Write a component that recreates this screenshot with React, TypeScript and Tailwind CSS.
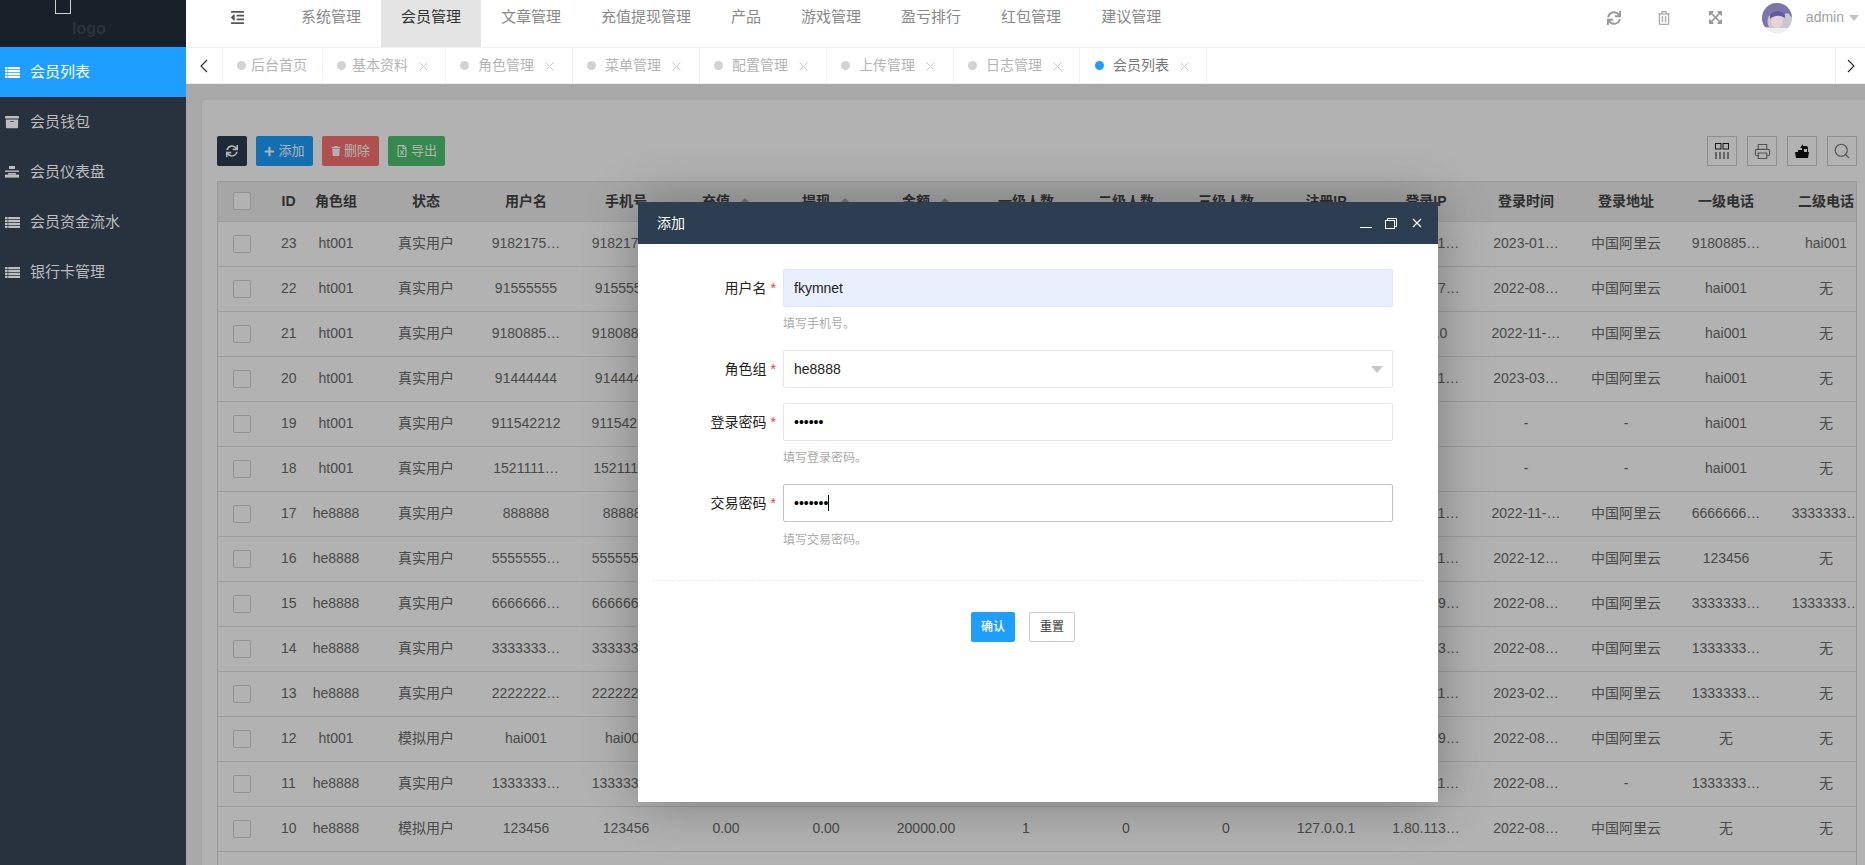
import React from 'react';
import { FaArchive, FaOutdent, FaSync, FaRegTrashAlt, FaExpandArrowsAlt, FaPlus, FaTrash, FaRegFileExcel } from 'react-icons/fa';
import { FiPrinter, FiSearch } from 'react-icons/fi';

function DashIcon() {
  return (
    <svg viewBox="0 0 14 12" className="h-[12px] w-[14px] fill-current">
      <rect x="4" y="0" width="6" height="3" />
      <rect x="0" y="4.5" width="14" height="1.4" />
      <rect x="3" y="7" width="8" height="1.6" />
      <rect x="0" y="8.6" width="14" height="3" />
    </svg>
  );
}

function ListIcon() {
  return (
    <svg viewBox="0 0 15 11" className="h-[11px] w-[15px] fill-current">
      <path d="M0 0h2.6v2.2H0zM3.2 0H15v2.2H3.2zM0 2.9h2.6v2.2H0zM3.2 2.9H15v2.2H3.2zM0 5.8h2.6V8H0zM3.2 5.8H15V8H3.2zM0 8.7h2.6V11H0zM3.2 8.7H15V11H3.2z" />
    </svg>
  );
}

const side = [
  { t: '会员列表', i: <ListIcon />, a: true },
  { t: '会员钱包', i: <FaArchive size={14} /> },
  { t: '会员仪表盘', i: <DashIcon /> },
  { t: '会员资金流水', i: <ListIcon /> },
  { t: '银行卡管理', i: <ListIcon /> },
];

const nav = ['系统管理', '会员管理', '文章管理', '充值提现管理', '产品', '游戏管理', '盈亏排行', '红包管理', '建议管理'];

const tabs = [
  { t: '后台首页', cls: 'w-[100px] pl-[14px]', gap: 'ml-[5px]', x: false },
  { t: '基本资料', cls: 'w-[123px] pl-[14px]', gap: 'ml-[6px]', x: true },
  { t: '角色管理', cls: 'w-[127px] pl-[14px]', gap: 'ml-[9px]', x: true },
  { t: '菜单管理', cls: 'w-[127px] pl-[14px]', gap: 'ml-[9px]', x: true },
  { t: '配置管理', cls: 'w-[127px] pl-[14px]', gap: 'ml-[9px]', x: true },
  { t: '上传管理', cls: 'w-[127px] pl-[14px]', gap: 'ml-[9px]', x: true },
  { t: '日志管理', cls: 'w-[126px] pl-[14px]', gap: 'ml-[9px]', x: true },
  { t: '会员列表', cls: 'w-[127px] pl-[15px]', gap: 'ml-[9px]', x: true, a: true },
];

const heads = ['状态', '用户名', '手机号', '充值', '提现', '金额', '一级人数', '二级人数', '三级人数', '注册IP', '登录IP', '登录时间', '登录地址', '一级电话', '二级电话'];

const A = '中国阿里云';
type R = [number, string, string, string, string, string, string, string, string, string, string];
const rows: R[] = [
  [23, 'ht001', '真实用户', '9182175…', '127.0.0.1', '1.80.111…', '2023-01…', A, '9180885…', 'hai001', '0'],
  [22, 'ht001', '真实用户', '91555555', '127.0.0.1', '1.80.117…', '2022-08…', A, 'hai001', '无', '0'],
  [21, 'ht001', '真实用户', '9180885…', '127.0.0.1', '1.0.0.0', '2022-11-…', A, 'hai001', '无', '0'],
  [20, 'ht001', '真实用户', '91444444', '127.0.0.1', '1.80.111…', '2023-03…', A, 'hai001', '无', '0'],
  [19, 'ht001', '真实用户', '911542212', '127.0.0.1', '', '-', '-', 'hai001', '无', '0'],
  [18, 'ht001', '真实用户', '1521111…', '127.0.0.1', '', '-', '-', 'hai001', '无', '0'],
  [17, 'he8888', '真实用户', '888888', '127.0.0.1', '1.80.111…', '2022-11-…', A, '6666666…', '3333333…', '0'],
  [16, 'he8888', '真实用户', '5555555…', '127.0.0.1', '1.80.111…', '2022-12…', A, '123456', '无', '0'],
  [15, 'he8888', '真实用户', '6666666…', '127.0.0.1', '1.80.119…', '2022-08…', A, '3333333…', '1333333…', '0'],
  [14, 'he8888', '真实用户', '3333333…', '127.0.0.1', '1.80.113…', '2022-08…', A, '1333333…', '无', '0'],
  [13, 'he8888', '真实用户', '2222222…', '127.0.0.1', '1.80.111…', '2023-02…', A, '1333333…', '无', '0'],
  [12, 'ht001', '模拟用户', 'hai001', '127.0.0.1', '1.80.119…', '2022-08…', A, '无', '无', '0'],
  [11, 'he8888', '真实用户', '1333333…', '127.0.0.1', '1.80.111…', '2022-08…', '-', '1333333…', '无', '0'],
  [10, 'he8888', '模拟用户', '123456', '127.0.0.1', '1.80.113…', '2022-08…', A, '无', '无', '1'],
];

function Check() {
  return <div className="ml-[15px] h-[18px] w-[18px] rounded-[2px] border border-[#d2d2d2] bg-white" />;
}

function Tri({ cls }: { cls: string }) {
  return <span className={'inline-block h-0 w-0 border-x-[5px] border-x-transparent ' + cls} />;
}

function ToolBtn({ cls, icon, text }: { cls: string; icon: React.ReactNode; text: string }) {
  return (
    <button className={'flex h-[30px] w-[57px] items-center justify-center gap-[3px] rounded-[2px] text-[13px] text-white ' + cls}>
      {icon}
      <span>{text}</span>
    </button>
  );
}

function Square({ children }: { children: React.ReactNode }) {
  return <div className="flex h-[30px] w-[30px] items-center justify-center border border-[#ccc] text-[#555]">{children}</div>;
}

function Field({ label, children, help, helpGap }: { label: string; children: React.ReactNode; help?: string; helpGap?: string }) {
  return (
    <div className="flex">
      <div className="flex h-[38px] w-[134px] items-center justify-end text-[14px] text-[#222]">
        <span>{label}</span>
        <span className="ml-[4px] mr-[6px] text-[#ff3333]">*</span>
      </div>
      <div className="ml-[1px] w-[610px]">
        {children}
        {help ? <div className={'h-[16px] text-[12px] leading-[16px] text-[#aaa] ' + (helpGap ?? 'mt-[9px]')}>{help}</div> : null}
      </div>
    </div>
  );
}

export default function App() {
  return (
    <div className="flex h-screen w-full overflow-hidden bg-white [font-family:'Liberation_Sans','Noto_Sans_CJK_SC',sans-serif]">
      <aside className="w-[186px] shrink-0 bg-[#28323e]">
        <div className="h-[47px] overflow-hidden bg-[#18202a]">
          <div className="ml-[55px] h-[14px] w-[16px] border border-t-0 border-[#cfcfcf]" />
          <div className="ml-[72px] mt-[6px] text-[16px] font-bold leading-[18px] text-[#2e333a]">logo</div>
        </div>
        {side.map((s) => (
          <div key={s.t} className={'flex h-[50px] items-center text-[15px] ' + (s.a ? 'bg-[#1e9fff] text-white' : 'text-[#bdbdbd]')}>
            <span className="ml-[5px] flex w-[25px] items-center">{s.i}</span>
            <span>{s.t}</span>
          </div>
        ))}
      </aside>

      <main className="flex min-w-0 flex-1 flex-col">
        <header className="flex h-[47px] shrink-0 bg-white">
          <div className="flex h-[34px] w-[95px] items-center justify-center pl-[8px] text-[#555]">
            <FaOutdent size={15} />
          </div>
          {nav.map((n) => (
            <div
              key={n}
              className={'h-[47px] px-[20px] text-[15px] leading-[34px] ' + (n === '会员管理' ? 'bg-[#e4e4e4] text-[#333]' : 'text-[#888]')}
            >
              {n}
            </div>
          ))}
          <div className="ml-auto flex h-[35px] items-center pr-[6px]">
            <FaSync size={14} className="text-[#999]" />
            <FaRegTrashAlt size={14} className="ml-[36px] text-[#aaa]" />
            <FaExpandArrowsAlt size={15} className="ml-[37px] text-[#999]" />
            <svg viewBox="0 0 30 30" className="ml-[39px] h-[30px] w-[30px] rounded-full">
              <rect width="30" height="30" fill="#c9c7cf" />
              <path d="M0 0H30V15C27 10 25 9 22 12 17 10 12 10 7 13 5 16 5 20 7 24L0 24Z" fill="#7b74ad" />
              <ellipse cx="15" cy="18" rx="6" ry="7" fill="#e4d5d3" />
              <path d="M8 12C12 7 20 7 23 12L23 15C18 12 13 12 8 16Z" fill="#625a9c" />
              <rect y="25" width="30" height="5" fill="#eef0ee" />
            </svg>
            <span className="ml-[14px] text-[14px] text-[#a0a0a0]">admin</span>
            <Tri cls="ml-[5px] border-t-[6px] border-t-[#c4c4c4]" />
          </div>
        </header>

        <nav className="flex h-[37px] shrink-0 border-y border-[#f0f0f0] bg-white">
          <div className="flex w-[37px] shrink-0 items-center justify-center border-r border-[#f0f0f0]">
            <svg viewBox="0 0 8 14" className="h-[14px] w-[8px] fill-none stroke-[#223] stroke-[1.1]"><path d="M7 1 1 7l6 6" /></svg>
          </div>
          {tabs.map((t) => (
            <div key={t.t} className={'flex shrink-0 items-center border-r border-[#f0f0f0] text-[14px] ' + t.cls + (t.a ? ' text-[#777]' : ' text-[#b4b4b4]')}>
              <span className={'h-[9px] w-[9px] rounded-full ' + (t.a ? 'bg-[#1e9fff]' : 'bg-[#d2d2d2]')} />
              <span className={t.gap}>{t.t}</span>
              {t.x ? (
                <svg viewBox="0 0 9 9" className="ml-[11px] mt-[2px] h-[9px] w-[9px] stroke-[#c8c8c8] stroke-[1]"><path d="M.5.5l8 8M8.5.5l-8 8" /></svg>
              ) : null}
            </div>
          ))}
          <div className="ml-auto flex w-[30px] shrink-0 items-center justify-center border-l border-[#f0f0f0]">
            <svg viewBox="0 0 8 14" className="h-[14px] w-[8px] fill-none stroke-[#223] stroke-[1.1]"><path d="M1 1l6 6-6 6" /></svg>
          </div>
        </nav>

        <section className="relative min-h-0 flex-1 overflow-hidden bg-[#f1f1f1] pl-[16px] pt-[16px]">
          <div className="h-full rounded-tl-[4px] bg-white pl-[15px] pr-[8px] pt-[36px]">
            <div className="flex h-[30px] items-center">
              <button className="flex h-[30px] w-[30px] items-center justify-center rounded-[2px] bg-[#2c3e50] text-white">
                <FaSync size={12} />
              </button>
              <div className="ml-[9px] flex gap-[9px]">
                <ToolBtn cls="bg-[#1a9fff]" icon={<FaPlus size={11} />} text="添加" />
                <ToolBtn cls="bg-[#fb7272]" icon={<FaTrash size={10} />} text="删除" />
                <ToolBtn cls="bg-[#4dc572]" icon={<FaRegFileExcel size={12} />} text="导出" />
              </div>
              <div className="ml-auto flex gap-[10px]">
                <Square>
                  <svg viewBox="0 0 14 16" className="h-[16px] w-[14px] fill-none stroke-[#222] stroke-[1]">
                    <rect x=".5" y=".5" width="5.5" height="5.5" />
                    <rect x="8" y=".5" width="5.5" height="5.5" />
                    <path d="M1 9v7M5 9v7M9 9v7M13 9v7" />
                  </svg>
                </Square>
                <Square><FiPrinter size={17} className="text-[#777]" strokeWidth={1.5} /></Square>
                <Square>
                  <svg viewBox="0 0 16 16" className="h-[16px] w-[16px] fill-[#111]">
                    <path d="M1 9h14l-1 6H2z" />
                    <path d="M4 9V7h4V5H6l3-4v2h3a2 2 0 0 1 2 2v4h-1V6H10v3z" />
                  </svg>
                </Square>
                <Square><FiSearch size={18} className="text-[#777]" strokeWidth={1.5} /></Square>
              </div>
            </div>

            <div className="mt-[15px] overflow-hidden border-x border-t border-[#dcdcdc]">
              <table className="w-[1658px] table-fixed border-collapse text-center text-[14px] text-[#6a6a6a]">
                <colgroup>
                  <col className="w-[63px]" />
                  <col className="w-[15px]" />
                  <col className="w-[80px]" />
                  {heads.map((h) => <col key={h} className="w-[100px]" />)}
                </colgroup>
                <thead>
                  <tr className="h-[39px] border-b border-[#e0e0e0] bg-[#eeeeee] font-bold text-[#444]">
                    <th className="p-0"><Check /></th>
                    <th className="whitespace-nowrap p-0">ID</th>
                    <th className="p-0">角色组</th>
                    {heads.map((h) => (
                      <th key={h} className="whitespace-nowrap p-0">
                        {h}
                        {h === '充值' || h === '提现' || h === '金额' ? <Tri cls="ml-[10px] align-[3px] border-b-[5px] border-b-[#aaa]" /> : null}
                      </th>
                    ))}
                  </tr>
                </thead>
                <tbody>
                  {rows.map((r) => (
                    <tr key={r[0]} className="h-[45px] border-b border-[#e0e0e0]">
                      <td className="p-0"><Check /></td>
                      <td className="p-0">{r[0]}</td>
                      <td className="p-0">{r[1]}</td>
                      <td className="p-0">{r[2]}</td>
                      <td className="p-0">{r[3]}</td>
                      <td className="p-0">{r[3]}</td>
                      <td className="p-0">0.00</td>
                      <td className="p-0">0.00</td>
                      <td className="p-0">20000.00</td>
                      <td className="p-0">{r[10]}</td>
                      <td className="p-0">0</td>
                      <td className="p-0">0</td>
                      <td className="p-0">{r[4]}</td>
                      <td className="p-0">{r[5]}</td>
                      <td className="p-0">{r[6]}</td>
                      <td className="p-0">{r[7]}</td>
                      <td className="p-0">{r[8]}</td>
                      <td className="p-0">{r[9]}</td>
                    </tr>
                  ))}
                  <tr className="h-[45px]"><td colSpan={18} /></tr>
                </tbody>
              </table>
            </div>
          </div>

          <div className="absolute inset-0 bg-black/30" />

          <div className="absolute left-[452px] top-[118px] flex h-[600px] w-[800px] flex-col bg-white shadow-[1px_1px_50px_rgba(0,0,0,0.3)]">
            <div className="flex h-[42px] shrink-0 items-center bg-[#2c3e50] pl-[19px] text-[14px] text-white">
              <span>添加</span>
              <div className="ml-auto flex items-center pr-[16px]">
                <span className="mt-[8px] h-[1px] w-[12px] bg-white" />
                <svg viewBox="0 0 12 11" className="ml-[13px] h-[11px] w-[12px] fill-none stroke-white stroke-[1]">
                  <rect x=".5" y="2.5" width="9" height="8" />
                  <path d="M2.5 2.5V.5h9v8h-2" />
                </svg>
                <svg viewBox="0 0 10 10" className="ml-[15px] h-[10px] w-[10px] stroke-white stroke-[1.2]"><path d="M1 1l8 8M9 1l-8 8" /></svg>
              </div>
            </div>

            <div className="flex flex-col pl-[10px] pt-[25px]">
              <Field label="用户名" help="填写手机号。">
                <input
                  readOnly
                  value="fkymnet"
                  className="block h-[38px] w-full rounded-[2px] border border-[#dfe5ee] bg-[#e8f0fe] pl-[10px] text-[14px] text-[#222] outline-none"
                />
              </Field>
              <div className="mt-[18px]">
                <Field label="角色组">
                  <div className="flex h-[38px] items-center rounded-[2px] border border-[#e6e6e6] pl-[10px] text-[14px] text-[#222]">
                    <span>he8888</span>
                    <Tri cls="ml-auto mr-[9px] border-x-[6px] border-t-[7px] border-t-[#c6c6c6]" />
                  </div>
                </Field>
              </div>
              <div className="mt-[15px]">
                <Field label="登录密码" help="填写登录密码。">
                  <input
                    readOnly
                    type="password"
                    value="123456"
                    className="block h-[38px] w-full rounded-[2px] border border-[#e6e6e6] pl-[10px] text-[14px] text-black outline-none"
                  />
                </Field>
              </div>
              <div className="mt-[18px]">
                <Field label="交易密码" help="填写交易密码。" helpGap="mt-[10px]">
                  <div className="relative">
                    <input
                      readOnly
                      type="password"
                      value="1234567"
                      className="block h-[38px] w-full rounded-[2px] border border-[#c2c2c2] pl-[10px] text-[14px] text-black outline-none"
                    />
                    <span className="absolute left-[45px] top-[11px] h-[16px] w-[1px] bg-black" />
                  </div>
                </Field>
              </div>
            </div>

            <div className="mx-[14px] mt-[32px] border-t border-dashed border-[#eeeeee]" />

            <div className="mt-[31px] flex pl-[333px] text-[12px]">
              <button className="h-[30px] w-[44px] rounded-[2px] bg-[#1e9fff] font-medium text-white">确认</button>
              <button className="ml-[14px] h-[30px] w-[46px] rounded-[2px] border border-[#c9c9c9] bg-white font-medium text-[#555]">重置</button>
            </div>
          </div>
        </section>
      </main>
    </div>
  );
}
